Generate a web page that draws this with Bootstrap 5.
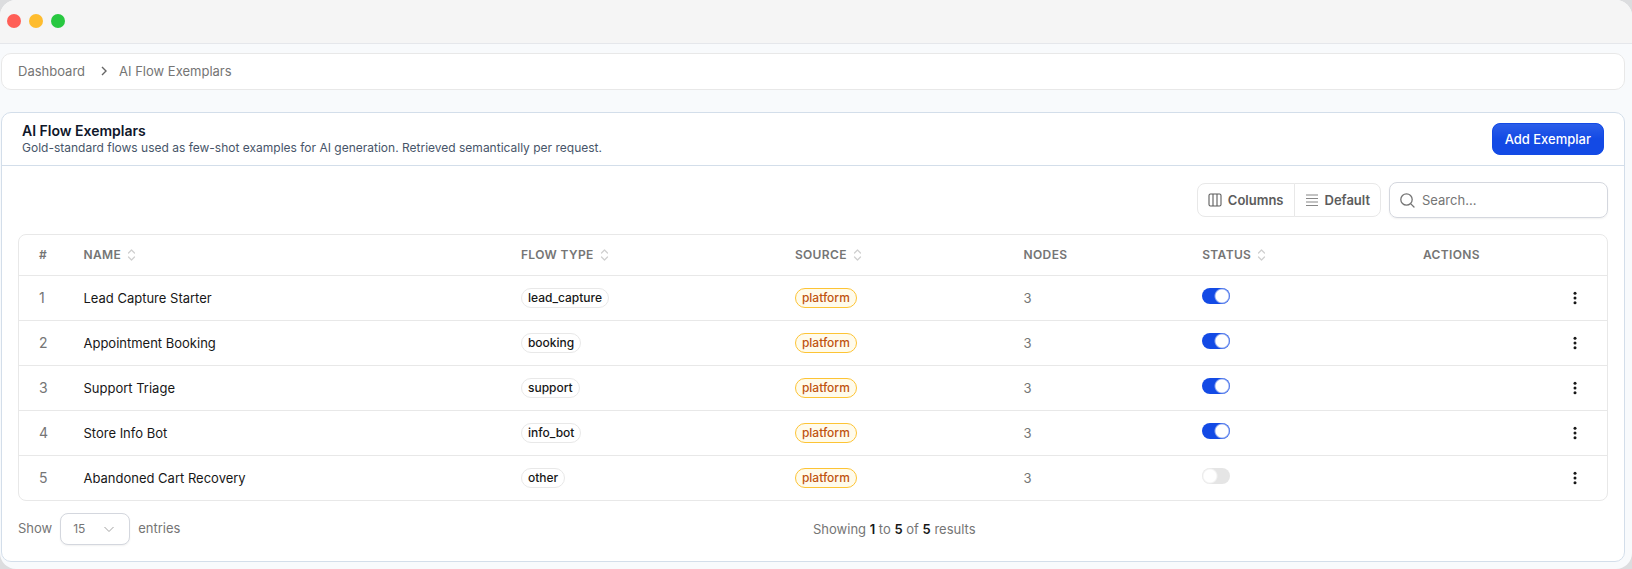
<!DOCTYPE html>
<html lang="en">
<head>
<meta charset="utf-8">
<meta name="viewport" content="width=device-width, initial-scale=1">
<title>AI Flow Exemplars</title>
<link href="https://cdn.jsdelivr.net/npm/bootstrap@5.3.0/dist/css/bootstrap.min.css" rel="stylesheet">
<style>
  :root { --line: #e8e8e8; --line-blue: #d3deea; --muted: #757575; --accent: #134ae5; }
  html { background: #dcdddf; }
  body { font-family: Inter, "Liberation Sans", sans-serif; font-size: 13px; line-height: 20px; color: #171717; background: transparent; }
  .app-window { min-height: 100vh; background: #f8fafc; border-radius: 16px; overflow: hidden; }
  .titlebar { height: 44px; background: #f5f5f5; border-bottom: 1px solid #e5e7eb; padding: 0 7px 2px; gap: 8px; }
  .light { width: 14px; height: 14px; border-radius: 50%; }
  .light-close { background: #ff5f57; } .light-min { background: #febc2e; } .light-max { background: #28c840; }
  .page-body { padding: 9px 7px 6px 1px; }
  .crumbs { background: #fff; border: 1px solid var(--line); border-radius: 10px; padding: 7px 16px 8px; margin-bottom: 22px; }
  .crumbs a, .crumbs span { color: var(--muted); text-decoration: none; }
  .crumbs svg { margin: 0 12px 0 16px; }
  .panel { background: #fff; border: 1px solid var(--line-blue); border-radius: 10px; }
  .panel-head { padding: 9px 20px; border-bottom: 1px solid var(--line-blue); }
  .panel-head h1 { font-size: 14px; line-height: 18px; font-weight: 600; color: #0f172a; margin: 0; }
  .panel-head p { font-size: 12px; line-height: 16px; color: #475569; margin: 0; }
  .btn-add { --bs-btn-color: #fff; --bs-btn-bg: var(--accent); --bs-btn-hover-bg: #0f3fc8; --bs-btn-hover-color: #fff; font-size: 13px; line-height: 20px; font-weight: 500; padding: 5px 12px; border-radius: 8px; border-color: var(--accent); background-image: linear-gradient(#2b5ee9, #134ae5 50%); }
  .panel-main { padding: 16px; }
  .tool { font-size: 13px; line-height: 20px; font-weight: 600; color: #5c5c5c; border: 1px solid var(--line); border-radius: 8px; padding: 6px 10px; display: flex; align-items: center; gap: 6px; background: #fff; }
  .search-box { width: 219px; height: 36px; border: 1px solid #d4d7de; border-radius: 8px; padding: 0 10px; gap: 7px; box-shadow: 0 1px 2px rgba(0,0,0,.06); color: var(--muted); }
  .search-box input { font-size: 13px; line-height: 20px; padding: 0; border: 0; background: transparent; box-shadow: none; min-width: 0; }
  .search-box input::placeholder { color: var(--muted); }
  .table-frame { border: 1px solid var(--line); border-radius: 8px; overflow: hidden; }
  .flows { table-layout: fixed; min-width: 1100px; margin: 0; }
  .flows th, .flows td { padding: 0 20px; height: 45px; vertical-align: middle; border-bottom: 1px solid var(--line); color: var(--muted); white-space: nowrap; }
  .flows th { height: 40px; font-size: 12px; font-weight: 600; text-transform: uppercase; letter-spacing: .03em; }
  .flows tbody tr:last-child td { border-bottom: 0; }
  .flows td.flow-name { color: #171717; }
  .flows td.row-no { font-size: 14px; }
  .flows th:first-child, .flows td:first-child { padding-right: 0; }
  .sort { margin-left: 6px; color: #cfcfcf; }
  .pill { display: inline-block; font-size: 12px; line-height: 18px; font-weight: 500; border: 1px solid var(--line); border-radius: 10px; padding: 0 6px; color: #171717; vertical-align: middle; }
  .pill-platform { color: #bf5310; border-color: #fdc435; background: #fffbeb; }
  .form-switch { min-height: 0; padding: 0; margin: 0 0 4px; display: flex; }
  .form-switch .form-check-input { width: 28px; height: 16px; margin: 0; border: 0; background-color: #e5e5e5; border-radius: 8px;
    background-image: radial-gradient(circle at 8px 8px, #fff 6px, transparent 8px); background-position: 0 0; background-size: 100% 100%; }
  .form-switch .form-check-input:checked { background-color: var(--accent); background-image: radial-gradient(circle at 20px 8px, #fff 6px, transparent 8px); background-position: 0 0; }
  .btn-more { padding: 0; width: 24px; height: 30px; border: 0; color: #171717; line-height: 1; }
  .table-foot { padding-top: 12px; color: var(--muted); }
  .table-foot strong { color: #171717; font-weight: 600; }
  .table-foot label, .table-foot .col > span { padding-bottom: 2px; }
  .per-page { width: 70px; height: 32px; font-size: 12px; line-height: 18px; padding: 0 12px; color: var(--muted); border: 1px solid #d4d7de; border-radius: 8px; box-shadow: 0 1px 2px rgba(0,0,0,.06);
    background-image: url("data:image/svg+xml,%3Csvg xmlns='http://www.w3.org/2000/svg' viewBox='0 0 12 12' fill='none' stroke='%23a3a3a3'%3E%3Cpath d='M1.5 4 6 8.5 10.5 4'/%3E%3C/svg%3E"); background-size: 12px; background-position: right 14px center; }
  svg { display: block; flex: none; }
  th svg { display: inline-block; vertical-align: -2px; }
</style>
</head>
<body>
<svg class="d-none" aria-hidden="true">
  <symbol id="sort-icon" viewBox="0 0 9 12"><path d="M1.500 4 4.500 1 7.500 4M1.500 8l3 3 3-3" fill="none" stroke="currentColor" stroke-width="1.200" stroke-linecap="round" stroke-linejoin="round"/></symbol>
  <symbol id="dots-icon" viewBox="0 0 4 14"><circle cx="2" cy="2.200" r="1.500"/><circle cx="2" cy="7" r="1.500"/><circle cx="2" cy="11.800" r="1.500"/></symbol>
</svg>
<div class="app-window">
  <header class="titlebar d-flex align-items-center">
    <span class="light light-close"></span><span class="light light-min"></span><span class="light light-max"></span>
  </header>
  <main class="page-body">
    <nav class="crumbs d-flex align-items-center" aria-label="Breadcrumb">
      <a href="#">Dashboard</a>
      <svg width="6" height="10" viewBox="0 0 6 10" fill="none" stroke="#666" stroke-width="1.400"><path d="M1 1l4 4-4 4"/></svg>
      <span aria-current="page">AI Flow Exemplars</span>
    </nav>
    <section class="panel">
      <div class="panel-head d-flex align-items-center justify-content-between">
        <div>
          <h1>AI Flow Exemplars</h1>
          <p>Gold-standard flows used as few-shot examples for AI generation. Retrieved semantically per request.</p>
        </div>
        <button type="button" class="btn btn-add">Add Exemplar</button>
      </div>
      <div class="panel-main">
        <div class="d-flex flex-wrap justify-content-end align-items-center gap-2 mb-3">
          <div class="btn-group">
            <button type="button" class="btn tool">
              <svg width="14" height="14" viewBox="0 0 14 14" fill="none" stroke="currentColor" stroke-width="1.100"><rect x="1" y="1" width="12" height="12" rx="1.500"/><path d="M5 1v12M9 1v12"/></svg>Columns</button>
            <button type="button" class="btn tool">
              <svg width="14" height="14" viewBox="0 0 14 14" fill="none" stroke="#888" stroke-width="1.200"><path d="M1 2h12M1 5.500h12M1 9h12M1 12.500h12"/></svg>Default</button>
          </div>
          <label class="search-box d-flex align-items-center">
            <svg width="15" height="15" viewBox="0 0 15 15" fill="none" stroke="currentColor" stroke-width="1.300" stroke-linecap="round"><circle cx="6.500" cy="6.500" r="5.700"/><path d="M10.600 10.600 14 14"/></svg>
            <input type="search" class="form-control" placeholder="Search..." aria-label="Search">
          </label>
        </div>
        <div class="table-frame table-responsive">
          <table class="table flows">
            <colgroup><col style="width:2.800%"><col style="width:27.550%"><col style="width:17.250%"><col style="width:14.400%"><col style="width:11.250%"><col style="width:13.900%"><col style="width:12.850%"></colgroup>
            <thead><tr>
              <th scope="col">#</th>
              <th scope="col">Name<svg class="sort" width="9" height="12"><use href="#sort-icon"/></svg></th>
              <th scope="col">Flow Type<svg class="sort" width="9" height="12"><use href="#sort-icon"/></svg></th>
              <th scope="col">Source<svg class="sort" width="9" height="12"><use href="#sort-icon"/></svg></th>
              <th scope="col">Nodes</th>
              <th scope="col">Status<svg class="sort" width="9" height="12"><use href="#sort-icon"/></svg></th>
              <th scope="col">Actions</th>
            </tr></thead>
            <tbody>
              <tr><td class="row-no">1</td><td class="flow-name">Lead Capture Starter</td><td><span class="pill">lead_capture</span></td><td><span class="pill pill-platform">platform</span></td><td>3</td><td><div class="form-check form-switch"><input class="form-check-input" type="checkbox" role="switch" aria-label="Lead Capture Starter status" checked></div></td><td><button type="button" class="btn btn-more d-flex align-items-center justify-content-center ms-auto" aria-label="Row actions"><svg width="4" height="14" fill="currentColor"><use href="#dots-icon"/></svg></button></td></tr>
              <tr><td class="row-no">2</td><td class="flow-name">Appointment Booking</td><td><span class="pill">booking</span></td><td><span class="pill pill-platform">platform</span></td><td>3</td><td><div class="form-check form-switch"><input class="form-check-input" type="checkbox" role="switch" aria-label="Appointment Booking status" checked></div></td><td><button type="button" class="btn btn-more d-flex align-items-center justify-content-center ms-auto" aria-label="Row actions"><svg width="4" height="14" fill="currentColor"><use href="#dots-icon"/></svg></button></td></tr>
              <tr><td class="row-no">3</td><td class="flow-name">Support Triage</td><td><span class="pill">support</span></td><td><span class="pill pill-platform">platform</span></td><td>3</td><td><div class="form-check form-switch"><input class="form-check-input" type="checkbox" role="switch" aria-label="Support Triage status" checked></div></td><td><button type="button" class="btn btn-more d-flex align-items-center justify-content-center ms-auto" aria-label="Row actions"><svg width="4" height="14" fill="currentColor"><use href="#dots-icon"/></svg></button></td></tr>
              <tr><td class="row-no">4</td><td class="flow-name">Store Info Bot</td><td><span class="pill">info_bot</span></td><td><span class="pill pill-platform">platform</span></td><td>3</td><td><div class="form-check form-switch"><input class="form-check-input" type="checkbox" role="switch" aria-label="Store Info Bot status" checked></div></td><td><button type="button" class="btn btn-more d-flex align-items-center justify-content-center ms-auto" aria-label="Row actions"><svg width="4" height="14" fill="currentColor"><use href="#dots-icon"/></svg></button></td></tr>
              <tr><td class="row-no">5</td><td class="flow-name">Abandoned Cart Recovery</td><td><span class="pill">other</span></td><td><span class="pill pill-platform">platform</span></td><td>3</td><td><div class="form-check form-switch"><input class="form-check-input" type="checkbox" role="switch" aria-label="Abandoned Cart Recovery status"></div></td><td><button type="button" class="btn btn-more d-flex align-items-center justify-content-center ms-auto" aria-label="Row actions"><svg width="4" height="14" fill="currentColor"><use href="#dots-icon"/></svg></button></td></tr>
            </tbody>
          </table>
        </div>
        <div class="table-foot row gx-0 align-items-center">
          <div class="col d-flex align-items-center gap-2">
            <label for="per-page">Show</label>
            <select id="per-page" class="form-select per-page"><option>15</option><option>30</option><option>50</option></select>
            <span>entries</span>
          </div>
          <div class="col">Showing <strong>1</strong> to <strong>5</strong> of <strong>5</strong> results</div>
        </div>
      </div>
    </section>
  </main>
</div>
<script src="https://cdn.jsdelivr.net/npm/bootstrap@5.3.0/dist/js/bootstrap.bundle.min.js"></script>
</body>
</html>
